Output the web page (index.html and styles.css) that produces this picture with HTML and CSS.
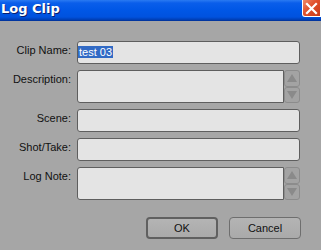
FILE: index.html
```html
<!DOCTYPE html>
<html lang="en">
<head>
  <meta charset="UTF-8" />
  <title>Log Clip</title>
  <link rel="stylesheet" href="styles.css">
</head>
<body>
  <div class="dialog">
    <div class="title-bar">
      <span class="title">Log Clip</span>
      <span class="close-btn">
        <svg width="13" height="13" viewBox="0 0 13 13">
          <path d="M2 2 L11 11 M11 2 L2 11" stroke="#fff" stroke-width="2.2" stroke-linecap="square" />
        </svg>
      </span>
    </div>

    <div class="form">
      <label class="label">Clip Name:</label>
      <div class="field"><span class="sel">test 03</span></div>

      <label class="label">Description:</label>
      <div class="field-multi">
        <div class="field area"></div>
        <div class="spin">
          <span class="spin-btn"><span class="arrow up"></span></span>
          <span class="spin-btn"><span class="arrow down"></span></span>
        </div>
      </div>

      <label class="label">Scene:</label>
      <div class="field"></div>

      <label class="label">Shot/Take:</label>
      <div class="field"></div>

      <label class="label">Log Note:</label>
      <div class="field-multi">
        <div class="field area"></div>
        <div class="spin">
          <span class="spin-btn"><span class="arrow up"></span></span>
          <span class="spin-btn"><span class="arrow down"></span></span>
        </div>
      </div>
    </div>

    <div class="buttons">
      <button class="btn btn-default">OK</button>
      <button class="btn">Cancel</button>
    </div>
  </div>
</body>
</html>
```

FILE: styles.css
```css
* {
  box-sizing: border-box;
}
body {
  margin: 0;
  background: #a6a6a6;
  font-family: "Liberation Sans", sans-serif;
}
.dialog {
  width: 321px;
  height: 250px;
  background: #a6a6a6;
  overflow: hidden;
}
.title-bar {
  height: 21px;
  display: flex;
  align-items: flex-start;
  justify-content: space-between;
  background: linear-gradient(#2a7af2 0px, #0a5eea 3px, #0057e6 10px, #0052de 17px, #003cb0 20px);
  border-bottom: 1px solid #0035a0;
}
.title {
  color: #fff;
  font-family: "DejaVu Sans", sans-serif;
  font-weight: bold;
  font-size: 13px;
  line-height: 17px;
  padding-left: 1px;
  text-shadow: 1px 1px 0 #0a1e6e;
}
.close-btn {
  width: 19px;
  height: 17px;
  background: linear-gradient(135deg, #f08a6a, #e0502c 45%, #c83a18);
  border: 1px solid #fff;
  border-top: none;
  border-radius: 0 0 0 3px;
  display: flex;
  align-items: center;
  justify-content: center;
}
.form {
  display: grid;
  grid-template-columns: 77px 223px;
  grid-template-rows: 23px 33px 23px 23px 33px;
  row-gap: 6px;
  padding-top: 20px;
}
.label {
  font-size: 11px;
  line-height: 13px;
  color: #111;
  text-align: right;
  padding-right: 6px;
  padding-top: 3px;
}
.field {
  background: #e4e4e4;
  border: 1px solid #5e5e5e;
  border-radius: 3px;
  padding: 4px 0 0 0;
  font-size: 11px;
  line-height: 13px;
}
.sel {
  background: #316ac5;
  color: #fff;
  padding: 0 1px;
}
.field-multi {
  display: flex;
}
.field-multi .area {
  flex: 1;
  border-radius: 3px 0 0 3px;
}
.spin {
  width: 16px;
  display: flex;
  flex-direction: column;
}
.spin-btn {
  flex: 1;
  background: #a3a3a3;
  border: 1px solid #8c8c8c;
  border-radius: 3px;
  display: flex;
  align-items: center;
  justify-content: center;
}
.arrow {
  width: 0;
  height: 0;
  border-left: 5px solid transparent;
  border-right: 5px solid transparent;
}
.arrow.up {
  border-bottom: 8px solid #8a8a8a;
}
.arrow.down {
  border-top: 8px solid #8a8a8a;
}
.buttons {
  display: flex;
  justify-content: flex-end;
  gap: 11px;
  padding: 17px 20px 0 0;
}
.btn {
  width: 72px;
  height: 22px;
  margin: 0;
  background: linear-gradient(#b4b4b4, #aaaaaa);
  border: 1px solid #6e6e6e;
  border-radius: 4px;
  font-family: "Liberation Sans", sans-serif;
  font-size: 11px;
  color: #111;
  padding: 0;
}
.btn-default {
  border: 2px solid #606060;
}
```
